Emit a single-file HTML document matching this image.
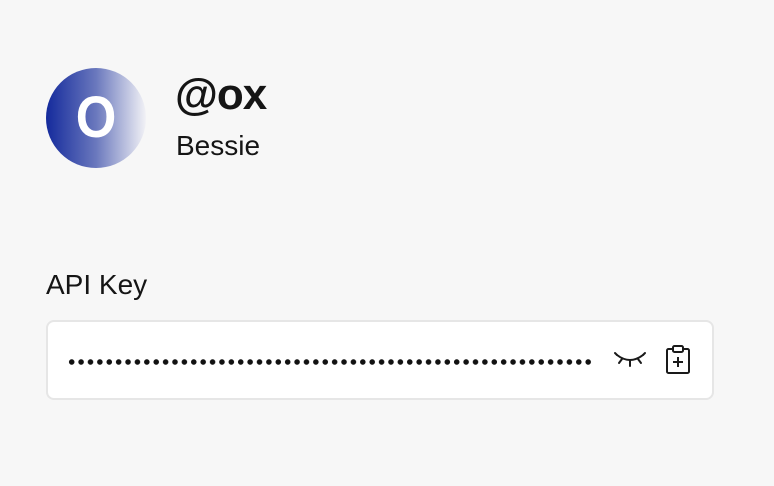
<!DOCTYPE html>
<html><head><style>
html,body{margin:0;padding:0;width:774px;height:486px;background:#f7f7f7;overflow:hidden;font-family:"Liberation Sans",sans-serif;color:#151515}
.av{position:absolute;left:46px;top:68px;width:100px;height:100px;border-radius:50%;background:linear-gradient(90deg,#142a9c 0%,#6a78bd 50%,#f2f2f6 100%)}
.av span{position:absolute;left:0;right:0;top:17px;text-align:center;color:#fff;font-weight:bold;font-size:58px;line-height:66px;transform:scaleX(0.9)}
.t1{position:absolute;left:175px;top:71px;font-size:44px;font-weight:bold;line-height:48px;letter-spacing:-1px}
.t2{position:absolute;left:176px;top:130px;font-size:28px;line-height:32px}
.lab{position:absolute;left:46px;top:268px;font-size:28px;line-height:34px}
.box{position:absolute;left:46px;top:320px;width:668px;height:80px;box-sizing:border-box;border:2px solid #e6e6e6;border-radius:8px;background:#fff}
.dots{position:absolute;left:67px;top:357px;width:527px;height:10px;background:radial-gradient(circle at 4.7px 5px,#111 2.5px,transparent 3px);background-size:9.4px 10px}
</style></head><body>
<div class="av"><span>O</span></div>
<div class="t1">@ox</div>
<div class="t2">Bessie</div>
<div class="lab">API Key</div>
<div class="box"></div>
<div class="dots"></div>
<svg style="position:absolute;left:612px;top:348px" width="36" height="24" viewBox="0 0 36 24" fill="none" stroke="#1a1a1a" stroke-width="2" stroke-linecap="round">
<path d="M5 7 Q18 17 31 7"/><path d="M18 12 V18"/><path d="M10 11 L7 15"/><path d="M26 11 L29 15"/><path d="M3 5 L5 7"/><path d="M33 5 L31 7"/>
</svg>
<svg style="position:absolute;left:664px;top:344px" width="28" height="32" viewBox="0 0 28 32" fill="none" stroke="#1a1a1a" stroke-width="2" stroke-linejoin="round">
<rect x="3" y="5" width="22" height="24" rx="1.5"/><rect x="9" y="2" width="10" height="6" rx="1.5" fill="#fff"/><path d="M14 13 V23 M9 18 H19"/>
</svg>
</body></html>
